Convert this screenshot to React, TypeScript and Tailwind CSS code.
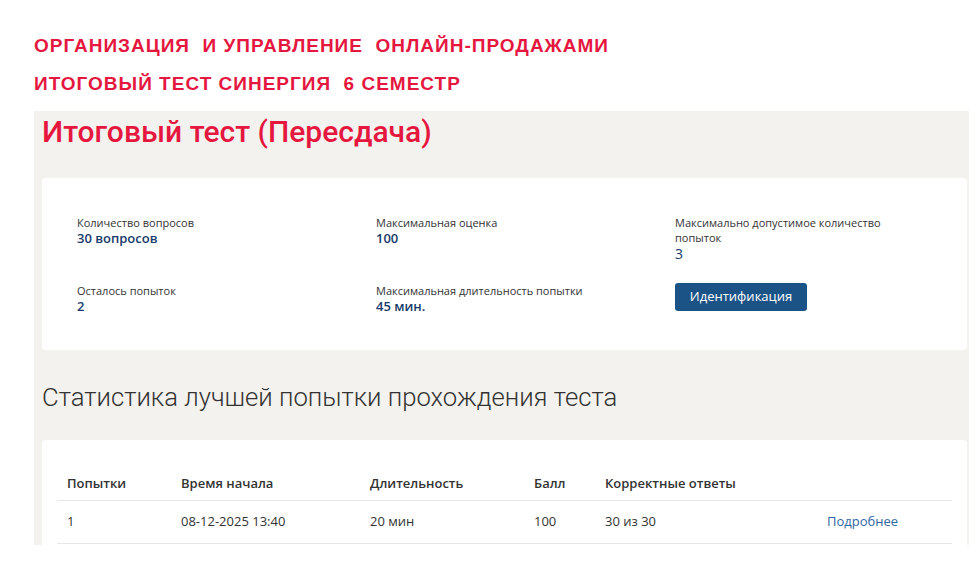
import React from "react";

const rows = [
  { a: "1", t: "08-12-2025 13:40", d: "20 мин", b: "100", c: "30 из 30" },
];

export default function App() {
  return (
    <div className="w-[977px] h-[564px] bg-white overflow-hidden" style={{ fontFamily: "'Open Sans', 'Noto Sans', sans-serif" }}>
      <div className="pl-[34px] pt-[27px] font-bold text-[19px] leading-[38px] tracking-[1px] text-[#e5173f]" style={{ fontFamily: "'Liberation Sans', Arial, sans-serif" }}>
        <div>ОРГАНИЗАЦИЯ&nbsp; И УПРАВЛЕНИЕ&nbsp; ОНЛАЙН-ПРОДАЖАМИ</div>
        <div>ИТОГОВЫЙ ТЕСТ СИНЕРГИЯ&nbsp; 6 СЕМЕСТР</div>
      </div>
      <div className="ml-[34px] mt-[8px] w-[935px] h-[434px] bg-[#f3f2ef] pl-[8px] pr-[2px] pt-[2px]">
        <h1 className="text-[30px] leading-[38px] font-medium text-[#e5173f]" style={{ fontFamily: "Roboto, 'Open Sans', sans-serif" }}>Итоговый тест (Пересдача)</h1>
        <div className="mt-[27px] bg-white rounded-[4px] h-[172px] pl-[35px] pt-[37px] grid grid-cols-[299px_299px_1fr]">
          <div className="flex flex-col gap-[36px]">
            <div>
              <div className="text-[11px] leading-[15px] text-[#333]">Количество вопросов</div>
              <div className="text-[13px] leading-[17px] font-semibold text-[#163a6a]">30 вопросов</div>
            </div>
            <div>
              <div className="text-[11px] leading-[15px] text-[#333]">Осталось попыток</div>
              <div className="text-[13px] leading-[17px] font-semibold text-[#163a6a]">2</div>
            </div>
          </div>
          <div className="flex flex-col gap-[36px]">
            <div>
              <div className="text-[11px] leading-[15px] text-[#333]">Максимальная оценка</div>
              <div className="text-[13px] leading-[17px] font-semibold text-[#163a6a]">100</div>
            </div>
            <div>
              <div className="text-[11px] leading-[15px] text-[#333]">Максимальная длительность попытки</div>
              <div className="text-[13px] leading-[17px] font-semibold text-[#163a6a]">45 мин.</div>
            </div>
          </div>
          <div>
            <div className="text-[11px] leading-[15px] text-[#333] w-[230px]">Максимально допустимое количество попыток</div>
            <div className="text-[14px] leading-[18px] text-[#163a6a]">3</div>
            <button className="mt-[20px] w-[132px] h-[28px] rounded-[3px] bg-[#1b5387] text-white text-[13px]">Идентификация</button>
          </div>
        </div>
        <h2 className="mt-[32px] text-[25.7px] leading-[30px] font-light text-[#333]" style={{ fontFamily: "Roboto, 'Open Sans', sans-serif" }}>Статистика лучшей попытки прохождения теста</h2>
        <div className="mt-[28px] bg-white rounded-t-[4px] h-[110px] pl-[15px] pr-[15px] pt-[34px]">
          <table className="w-full text-[13px] text-[#333] border-collapse">
            <thead>
              <tr className="border-b border-[#e6e6e6] h-[26px]">
                <th className="text-left font-semibold pl-[10px] w-[124px] align-top">Попытки</th>
                <th className="text-left font-semibold w-[189px] align-top">Время начала</th>
                <th className="text-left font-semibold w-[164px] align-top">Длительность</th>
                <th className="text-left font-semibold w-[71px] align-top">Балл</th>
                <th className="text-left font-semibold w-[222px] align-top">Корректные ответы</th>
                <th></th>
              </tr>
            </thead>
            <tbody>
              {rows.map((r) => (
                <tr key={r.a} className="border-b border-[#e6e6e6] h-[43px]">
                  <td className="pl-[10px]">{r.a}</td>
                  <td>{r.t}</td>
                  <td>{r.d}</td>
                  <td>{r.b}</td>
                  <td>{r.c}</td>
                  <td className="text-[#2f67a3]">Подробнее</td>
                </tr>
              ))}
            </tbody>
          </table>
        </div>
      </div>
    </div>
  );
}
